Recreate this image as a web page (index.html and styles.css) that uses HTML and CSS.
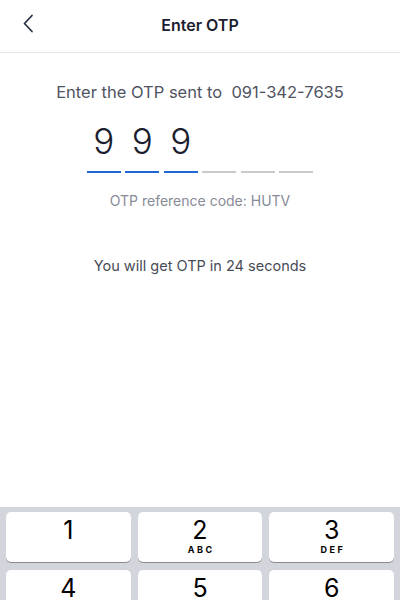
FILE: index.html
```html
<!DOCTYPE html>
<html>
<head>
<meta charset="utf-8">
<link rel="stylesheet" href="styles.css">
</head>
<body>
<div class="screen">
  <header class="header">
    <button class="back" aria-label="Back">
      <svg width="12" height="19" viewBox="0 0 12 19"><path d="M10 1.5 L2.5 9.5 L10 17.5" fill="none" stroke="#2e3447" stroke-width="1.8" stroke-linecap="round" stroke-linejoin="round"/></svg>
    </button>
    <h1 class="title">Enter OTP</h1>
  </header>
  <main class="content">
    <p class="sent">Enter the OTP sent to&nbsp; 091-342-7635</p>
    <div class="otp">
      <div class="cell filled"><span>9</span></div>
      <div class="cell filled"><span>9</span></div>
      <div class="cell filled"><span>9</span></div>
      <div class="cell"><span></span></div>
      <div class="cell"><span></span></div>
      <div class="cell"><span></span></div>
    </div>
    <p class="ref">OTP reference code: HUTV</p>
    <p class="timer">You will get OTP in 24 seconds</p>
  </main>
  <section class="keyboard">
    <div class="key"><span class="num">1</span></div>
    <div class="key"><span class="num">2</span><span class="letters">ABC</span></div>
    <div class="key"><span class="num">3</span><span class="letters">DEF</span></div>
    <div class="key"><span class="num">4</span></div>
    <div class="key"><span class="num">5</span></div>
    <div class="key"><span class="num">6</span></div>
  </section>
</div>
</body>
</html>
```
FILE: styles.css
```css
* { box-sizing: border-box; }
html, body { margin: 0; padding: 0; }
body {
  background: #fff;
  font-family: Inter, "Noto Sans", sans-serif;
  color: #1f2233;
}
.screen {
  width: 400px;
  height: 600px;
  overflow: hidden;
  display: flex;
  flex-direction: column;
}
.header {
  height: 53px;
  flex: none;
  position: relative;
  display: flex;
  align-items: center;
  justify-content: center;
  border-bottom: 1px solid #e4e4e7;
}
.back {
  position: absolute;
  left: 22px;
  top: 14px;
  border: 0;
  background: none;
  padding: 0;
  width: 12px;
  height: 19px;
  display: block;
}
.back svg { display: block; }
.title {
  margin: 0;
  font-size: 16px;
  font-weight: 600;
  color: #1d2030;
  line-height: 20px;
  margin-top: -2px;
}
.content {
  height: 454px;
  flex: none;
  display: flex;
  flex-direction: column;
  align-items: center;
  padding-top: 29px;
}
.sent {
  margin: 0;
  font-size: 16.5px;
  line-height: 20px;
  color: #50545f;
}
.otp {
  display: flex;
  gap: 4.5px;
  margin-top: 17px;
}
.cell {
  width: 34px;
  height: 54px;
  display: flex;
  flex-direction: column;
  align-items: center;
  border-bottom: 2px solid #c9cacd;
}
.cell.filled { border-bottom-color: #1f67d2; }
.cell span {
  height: 44px;
  font-size: 35px;
  line-height: 44px;
  font-weight: 300;
  color: #1b1e2e;
}
.ref {
  margin: 19px 0 0;
  font-size: 14px;
  line-height: 18px;
  color: #878b96;
}
.timer {
  margin: 47px 0 0;
  font-size: 14.5px;
  line-height: 18px;
  color: #474b57;
}
.keyboard {
  flex: 1;
  background: #d2d5db;
  display: grid;
  grid-template-columns: repeat(3, 1fr);
  grid-auto-rows: 50px;
  column-gap: 7px;
  row-gap: 8px;
  padding: 5px 6px 0;
}
.key {
  background: #fff;
  border-radius: 5px;
  box-shadow: 0 1px 0 #8a8b8f;
  display: flex;
  flex-direction: column;
  align-items: center;
  padding-top: 5px;
  font-family: Inter, "Liberation Sans", sans-serif;
  color: #000;
}
.num {
  font-size: 25px;
  line-height: 26px;
  font-weight: 400;
}
.letters {
  margin-top: 2px;
  font-size: 9px;
  font-weight: 700;
  letter-spacing: 2.5px;
  line-height: 10px;
  margin-left: 2.5px;
}
```
